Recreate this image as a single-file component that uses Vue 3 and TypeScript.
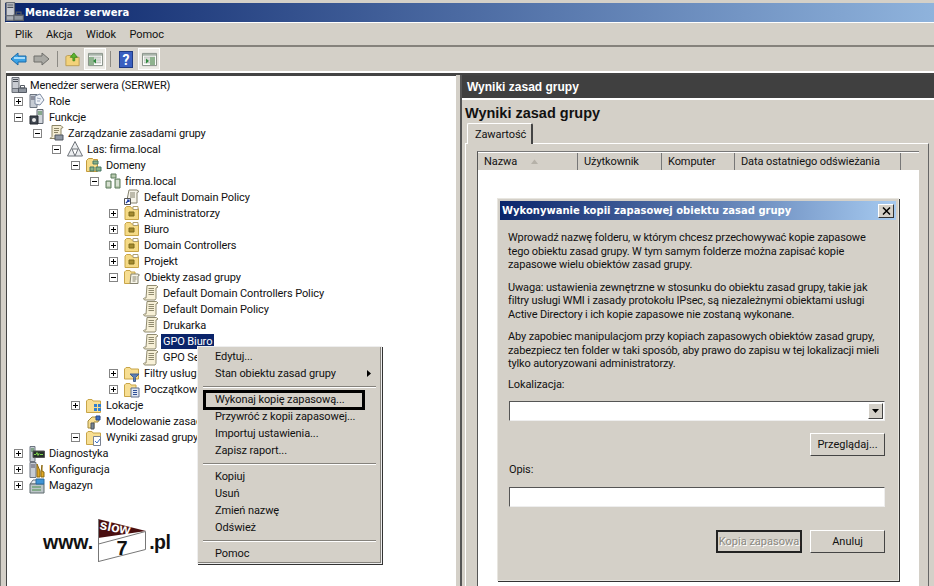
<script setup lang="ts">
interface TreeRow {
  label: string;
  depth: number;
  icon: string;
  toggle?: '+' | '-';
  selected?: boolean;
}

const menus = ['Plik', 'Akcja', 'Widok', 'Pomoc'];

const rows: TreeRow[] = [
  { label: 'Menedżer serwera (SERWER)', depth: -1, icon: 'server' },
  { label: 'Role', depth: 0, icon: 'roles', toggle: '+' },
  { label: 'Funkcje', depth: 0, icon: 'features', toggle: '-' },
  { label: 'Zarządzanie zasadami grupy', depth: 1, icon: 'gpm', toggle: '-' },
  { label: 'Las: firma.local', depth: 2, icon: 'forest', toggle: '-' },
  { label: 'Domeny', depth: 3, icon: 'domains', toggle: '-' },
  { label: 'firma.local', depth: 4, icon: 'domain', toggle: '-' },
  { label: 'Default Domain Policy', depth: 5, icon: 'link' },
  { label: 'Administratorzy', depth: 5, icon: 'ou', toggle: '+' },
  { label: 'Biuro', depth: 5, icon: 'ou', toggle: '+' },
  { label: 'Domain Controllers', depth: 5, icon: 'ou', toggle: '+' },
  { label: 'Projekt', depth: 5, icon: 'ou', toggle: '+' },
  { label: 'Obiekty zasad grupy', depth: 5, icon: 'gpofolder', toggle: '-' },
  { label: 'Default Domain Controllers Policy', depth: 6, icon: 'scroll' },
  { label: 'Default Domain Policy', depth: 6, icon: 'scroll' },
  { label: 'Drukarka', depth: 6, icon: 'scroll' },
  { label: 'GPO Biuro', depth: 6, icon: 'scroll', selected: true },
  { label: 'GPO Serwery', depth: 6, icon: 'scroll' },
  { label: 'Filtry usługi WMI', depth: 5, icon: 'filter', toggle: '+' },
  { label: 'Początkowe obiekty', depth: 5, icon: 'starter', toggle: '+' },
  { label: 'Lokacje', depth: 3, icon: 'sites', toggle: '+' },
  { label: 'Modelowanie zasad grupy', depth: 3, icon: 'modeling' },
  { label: 'Wyniki zasad grupy', depth: 3, icon: 'results', toggle: '-' },
  { label: 'Diagnostyka', depth: 0, icon: 'diag', toggle: '+' },
  { label: 'Konfiguracja', depth: 0, icon: 'config', toggle: '+' },
  { label: 'Magazyn', depth: 0, icon: 'storage', toggle: '+' },
];

const menuGroups = [
  ['Edytuj...', 'Stan obiektu zasad grupy'],
  ['Wykonaj kopię zapasową...', 'Przywróć z kopii zapasowej...', 'Importuj ustawienia...', 'Zapisz raport...'],
  ['Kopiuj', 'Usuń', 'Zmień nazwę', 'Odśwież'],
  ['Pomoc'],
];

const columns = [
  { label: 'Nazwa', width: 100, sort: true },
  { label: 'Użytkownik', width: 84 },
  { label: 'Komputer', width: 73 },
  { label: 'Data ostatniego odświeżania', width: 166 },
];

const paragraphs = [
  [
    'Wprowadź nazwę folderu, w którym chcesz przechowywać kopie zapasowe',
    'tego obiektu zasad grupy. W tym samym folderze można zapisać kopie',
    'zapasowe wielu obiektów zasad grupy.',
  ],
  [
    'Uwaga: ustawienia zewnętrzne w stosunku do obiektu zasad grupy, takie jak',
    'filtry usługi WMI i zasady protokołu IPsec, są niezależnymi obiektami usługi',
    'Active Directory i ich kopie zapasowe nie zostaną wykonane.',
  ],
  [
    'Aby zapobiec manipulacjom przy kopiach zapasowych obiektów zasad grupy,',
    'zabezpiecz ten folder w taki sposób, aby prawo do zapisu w tej lokalizacji mieli',
    'tylko autoryzowani administratorzy.',
  ],
];
</script>

<template>
  <div class="window">
    <svg class="defs" width="0" height="0" aria-hidden="true">
      <symbol id="i-server" viewBox="0 0 16 16">
        <path d="M1 0.500h7v11H1z" fill="#c9ccd2" stroke="#6b7078" />
        <path d="M2 2.500h5M2 4.500h5" stroke="#4a4f58" />
        <path d="M1 11.500h7v4H1z" fill="#a8adb5" stroke="#6b7078" />
        <path d="M7.500 11h8v4.500h-8z" fill="#8d949e" stroke="#555b64" />
        <path d="M9.500 8.500h4v2.500h-4z" fill="none" stroke="#555b64" />
      </symbol>
      <symbol id="i-roles" viewBox="0 0 16 16">
        <path d="M1 1.500h7v13H1z" fill="#c6ccd4" stroke="#6d7580" />
        <path d="M2 4h5M2 6h5" stroke="#556" />
        <path d="M6 3l5-2 4 6-4 5-5-1z" fill="#eef2f8" stroke="#7d8aa0" />
        <path d="M8 5l4 1M8 8l3 0" stroke="#9aa6ba" />
      </symbol>
      <symbol id="i-features" viewBox="0 0 16 16">
        <path d="M8 0.500h6v14H8z" fill="#d2d6dc" stroke="#5f6670" />
        <path d="M9 3h4M9 5h4" stroke="#3d7a3d" />
        <path d="M1 7h8v8H1z" fill="#3f4650" stroke="#22272e" />
        <circle cx="5" cy="11" r="2" fill="#e8e8e8" />
      </symbol>
      <symbol id="i-gpm" viewBox="0 0 16 16">
        <path d="M4 0.500h9l2 2-2 1v10H2l2-2z" fill="#f3ecd2" stroke="#8b8465" />
        <path d="M6 3.500h5M6 5.500h5M6 7.500h4" stroke="#8b8465" />
        <path d="M7 10h8v5H7z" fill="#8f98a4" stroke="#505760" />
      </symbol>
      <symbol id="i-forest" viewBox="0 0 16 16">
        <path d="M8 0.500L15.500 15H0.500z" fill="#eceef0" stroke="#6d7278" />
        <path d="M5 8h6L8 15z" fill="#fff" stroke="#6d7278" />
      </symbol>
      <symbol id="i-domains" viewBox="0 0 16 16">
        <path d="M0.500 14V3.500l2-2h4l1 1h4v12H0.500z" fill="#f6dc88" stroke="#c39b3d" />
        <path d="M7 4h5v3H7zM4 10h4v4H4zM10 10h5v4h-5z" fill="#89b287" stroke="#476" />
      </symbol>
      <symbol id="i-domain" viewBox="0 0 16 16">
        <path d="M6 1h5v4H6zM1 8h5v7H1zM10 6h5v9h-5z" fill="#b7c9ad" stroke="#5c7a5c" />
        <path d="M2 10h3M2 12h3M11 8h3M11 10h3M11 12h3" stroke="#f6f6f6" />
      </symbol>
      <symbol id="i-link" viewBox="0 0 16 16">
        <path d="M5 1h8l2 1.500-2 1V14H3V11z" fill="#f6f4ea" stroke="#85826f" />
        <path d="M6 4h5M6 6h5M6 8h5" stroke="#85826f" />
        <path d="M0.500 9.500h6v6h-6z" fill="#fff" stroke="#555" />
        <path d="M2 14l3-3M3 11h2v2" fill="none" stroke="#1d3fa8" stroke-width="1.200" />
      </symbol>
      <symbol id="i-ou" viewBox="0 0 16 16">
        <path d="M1 14.500V3l1.500-1.500h4L7.500 3h6l1 1v10.500z" fill="#f5da85" stroke="#c8a548" />
        <path d="M9 1.500h5v3H9z" fill="#fff" stroke="#b0a070" />
        <path d="M5 7h5v4H5z" fill="#a48a2f" stroke="#7d6a1d" />
      </symbol>
      <symbol id="i-gpofolder" viewBox="0 0 16 16">
        <path d="M0.500 14.500V3l1.500-1.500h4L7 3h4v11.500z" fill="#f7de92" stroke="#c8a548" />
        <path d="M7 5h7l1.500 1-1.500 1v7.500H6z" fill="#f7f5e8" stroke="#85826f" />
        <path d="M8.500 8h4M8.500 10h4M8.500 12h3" stroke="#85826f" />
      </symbol>
      <symbol id="i-scroll" viewBox="0 0 16 16">
        <path d="M4 0.500h9.500l1.500 1.500-2 1v10.500l-1 1.500H1.500l-1-1.500 1-.5H3z" fill="#f7f0d7" stroke="#8f8a6f" />
        <path d="M5.500 3.500h5.500M5.500 5.500h5.500M5.500 7.500h5.500M5.500 9.500h5.500" stroke="#8f8a6f" />
      </symbol>
      <symbol id="i-filter" viewBox="0 0 16 16">
        <path d="M0.500 13V3l1.500-1.500h4L7 3h7.500v10z" fill="#f7de92" stroke="#c8a548" />
        <path d="M6 8h9l-3.500 3.500v4h-2v-4z" fill="#5b7fb5" stroke="#44608a" />
      </symbol>
      <symbol id="i-starter" viewBox="0 0 16 16">
        <path d="M0.500 14.500V3l1.500-1.500h4L7 3h5v11.500z" fill="#f7de92" stroke="#c8a548" />
        <path d="M7 6h8v9H7z" fill="#dfe6f2" stroke="#5f6f8c" />
        <path d="M9 8.500h4M9 10.500h4M9 12.500h4" stroke="#2d4f97" />
      </symbol>
      <symbol id="i-sites" viewBox="0 0 16 16">
        <path d="M0.500 14.500V3l1.500-1.500h4L7 3h7.500v11.500z" fill="#f7de92" stroke="#c8a548" />
        <path d="M8 6h3v3H8zM12 6h3v3h-3zM8 10h3v3H8zM12 10h3v3h-3z" fill="#2f7fd0" />
      </symbol>
      <symbol id="i-modeling" viewBox="0 0 16 16">
        <path d="M2 7l4-4h8l-2 5H8v6H2z" fill="#f7de92" stroke="#a48a3a" />
        <path d="M5 9h3v6H5z" fill="#7a8795" stroke="#4d5560" />
        <path d="M10 2h4v4h-4z" fill="#3f6fc0" stroke="#2a4a88" />
      </symbol>
      <symbol id="i-results" viewBox="0 0 16 16">
        <path d="M0.500 14.500V3l1.500-1.500h4L7 3h7.500v11.500z" fill="#f7de92" stroke="#c8a548" />
        <path d="M7.500 6.500h7v9h-7z" fill="#fff" stroke="#7a8290" />
        <path d="M9 11l2 2 3-4" fill="none" stroke="#3b70c4" />
      </symbol>
      <symbol id="i-diag" viewBox="0 0 16 16">
        <path d="M1 0.500h5v15H1z" fill="#c6ccd4" stroke="#6d7580" />
        <path d="M2 3h3M2 5h3" stroke="#3d7a3d" />
        <path d="M4 5h11.500v6.500H4z" fill="#26302a" stroke="#555" />
        <path d="M5 8.500h2l1-2 1 3 1-2 1 1h3" fill="none" stroke="#7fd34e" />
      </symbol>
      <symbol id="i-config" viewBox="0 0 16 16">
        <path d="M1 0.500h6v15H1z" fill="#c6ccd4" stroke="#6d7580" />
        <path d="M2 3h4M2 5h4" stroke="#556" />
        <path d="M8 2l3 7v6H8V9z" fill="#e0a825" stroke="#8d6a12" />
        <path d="M13 3v6l2 1v5h-3v-5z" fill="#e0a825" stroke="#8d6a12" />
      </symbol>
      <symbol id="i-storage" viewBox="0 0 16 16">
        <path d="M1 6l3-4h8v4z" fill="#e9ecef" stroke="#6d7580" />
        <path d="M1 6h14v9H1z" fill="#bcc5c8" stroke="#5f6a6e" />
        <path d="M7 1h8v5H7z" fill="#3f94d6" stroke="#2a6a9e" />
        <path d="M3 9h9M3 12h9" stroke="#4d8f4d" />
      </symbol>
      <symbol id="i-pane" viewBox="0 0 16 16">
        <path d="M0.500 1.500h15v13H0.500z" fill="#fff" stroke="#7f8a80" />
        <path d="M1 2h14v2H1z" fill="#a9b4aa" />
        <path d="M2 5.500h12M2 7.500h12M2 9.500h12M2 11.500h12" stroke="#a9b0a8" />
      </symbol>
    </svg>

    <header class="titlebar">
      <svg class="title-icon" width="19" height="19"><use href="#i-server" /></svg>
      <span>Menedżer serwera</span>
    </header>

    <nav class="menubar">
      <span v-for="menu in menus" :key="menu">{{ menu }}</span>
    </nav>

    <div class="toolbar">
      <svg class="tool-back" width="17" height="16" viewBox="0 0 17 16">
        <path d="M1 8l7-6v3h8v6H8v3z" fill="#3aa2e6" stroke="#1c6aa8" />
        <path d="M4 7h11" stroke="#a8dcfa" stroke-width="2" />
      </svg>
      <svg class="tool-forward" width="17" height="16" viewBox="0 0 17 16">
        <path d="M16 8L9 2v3H1v6h8v3z" fill="#a9a9a4" stroke="#6e6e6a" />
      </svg>
      <i class="tool-sep first"></i>
      <svg width="15" height="17" viewBox="0 0 17 17">
        <path d="M1 15.500V5l2-1h5l1 2h7v9.500z" fill="#f3d27a" stroke="#b99a4e" />
        <path d="M9 10V6H6l4-5 4 5h-3v4z" fill="#5fb52e" stroke="#3d8a1a" />
      </svg>
      <span class="tool-on tree-toggle">
        <svg width="17" height="15"><use href="#i-pane" /><path d="M2 5h5v8H2z" fill="#8fb38f" /><path d="M6 9l3-2.500v5z" fill="#2f8a3d" /></svg>
      </span>
      <i class="tool-sep second"></i>
      <svg width="14" height="17" viewBox="0 0 14 17">
        <rect x="0.500" y="0.500" width="13" height="16" fill="#3a5fc0" stroke="#1f3a84" />
        <text x="7" y="13.500" text-anchor="middle" class="help-q">?</text>
      </svg>
      <span class="tool-on action-toggle">
        <svg width="17" height="15"><use href="#i-pane" /><path d="M9 5h5v8H9z" fill="#8fb38f" /><path d="M8 9L5 6.500v5z" fill="#2f8a3d" /></svg>
      </span>
    </div>

    <main class="panes">
      <section class="tree-pane">
        <div
          v-for="(row, i) in rows"
          :key="i"
          class="row"
          :class="{ root: row.depth < 0 }"
          :style="{ paddingLeft: 19 * Math.max(row.depth, 0) + 'px' }"
        >
          <span v-if="row.depth >= 0" class="toggle" :class="{ blank: !row.toggle }">
            <template v-if="row.toggle === '+'">
              <svg width="7" height="7"><path d="M1 3.500h5M3.500 1v5" stroke="#000" /></svg>
            </template>
            <template v-else-if="row.toggle === '-'">
              <svg width="7" height="7"><path d="M1 3.500h5" stroke="#000" /></svg>
            </template>
          </span>
          <svg class="node-icon" width="16" height="16"><use :href="'#i-' + row.icon" /></svg>
          <span class="label" :class="{ selected: row.selected }">{{ row.label }}</span>
        </div>

        <div class="brand">
          <span class="brand-text">www.</span>
          <svg width="48" height="43" viewBox="0 0 48 43">
            <path d="M0 0L48 12 0 19z" fill="#4a0f10" />
            <path d="M0.500 25L47.500 12.500v18L0.500 42.500z" fill="#fff" stroke="#777" />
            <path d="M0.500 0v43" stroke="#777" />
            <text x="1" y="10" class="brand-slow" transform="rotate(11 1 10)">slow</text>
            <text x="24" y="36" text-anchor="middle" class="brand-seven">7</text>
          </svg>
          <span class="brand-text">.pl</span>
        </div>
      </section>

      <section class="result-pane">
        <div class="result-head">Wyniki zasad grupy</div>
        <div class="result-body">
          <h1>Wyniki zasad grupy</h1>
          <div class="tab">Zawartość</div>
          <div class="tab-page">
            <div class="list">
              <div class="list-head">
                <span
                  v-for="col in columns"
                  :key="col.label"
                  class="col"
                  :style="{ width: col.width + 'px' }"
                >
                  {{ col.label }}
                  <svg v-if="col.sort" class="sort" width="9" height="6"><path d="M4.500 0.500L8 5H1z" fill="#b5b1a8" /></svg>
                </span>
                <span class="col last"></span>
              </div>
            </div>
          </div>
        </div>
      </section>
    </main>

    <div class="context-menu">
      <template v-for="(group, g) in menuGroups" :key="g">
        <hr v-if="g > 0" />
        <div
          v-for="item in group"
          :key="item"
          class="menu-item"
          :class="{ boxed: item.startsWith('Wykonaj') }"
        >
          {{ item }}
          <svg v-if="item.startsWith('Stan')" class="arrow" width="4" height="7"><path d="M0 0l4 3.500L0 7z" fill="#000" /></svg>
        </div>
      </template>
    </div>

    <div class="dialog">
      <div class="dialog-title">
        <span>Wykonywanie kopii zapasowej obiektu zasad grupy</span>
        <button class="close" type="button" aria-label="Zamknij">
          <svg width="9" height="8"><path d="M1 0.500l7 7M8 0.500l-7 7" stroke="#000" stroke-width="1.500" /></svg>
        </button>
      </div>
      <div class="dialog-body">
        <p v-for="(lines, p) in paragraphs" :key="p">
          <span v-for="line in lines" :key="line" class="line">{{ line }}</span>
        </p>
        <label class="field-label first">Lokalizacja:</label>
        <div class="combo">
          <span class="combo-btn">
            <svg width="7" height="4"><path d="M0 0h7L3.500 4z" fill="#000" /></svg>
          </span>
        </div>
        <div class="actions browse">
          <button class="btn" type="button">Przeglądaj...</button>
        </div>
        <label class="field-label">Opis:</label>
        <div class="text-input"></div>
        <div class="actions footer">
          <button class="btn default" type="button" disabled>Kopia zapasowa</button>
          <button class="btn" type="button">Anuluj</button>
        </div>
      </div>
    </div>
  </div>
</template>

<style>
html,
body {
  margin: 0;
  padding: 0;
  overflow: hidden;
}
</style>

<style scoped>
.window {
  position: relative;
  width: 934px;
  height: 586px;
  overflow: hidden;
  box-sizing: border-box;
  padding: 3px 0 0 5px;
  background: #d4d0c8;
  border-left: 1px solid #7a7a76;
  font-family: Roboto, "Liberation Sans", Arial, sans-serif;
  font-size: 11px;
  letter-spacing: -0.1px;
  color: #111;
  display: flex;
  flex-direction: column;
}

.defs {
  position: absolute;
}

.titlebar {
  height: 19px;
  flex: none;
  box-sizing: border-box;
  display: flex;
  align-items: center;
  gap: 1px;
  margin-left: -1px;
  background: linear-gradient(90deg, #0a246a, #8fb3dc);
  color: #fff;
  font-family: "DejaVu Sans", sans-serif;
  font-size: 10px;
  font-weight: bold;
  letter-spacing: 0;
}

.title-icon {
  margin-top: -3px;
}

.menubar {
  height: 25px;
  flex: none;
  box-sizing: border-box;
  display: flex;
  align-items: center;
  gap: 13.500px;
  padding-left: 9px;
  border-top: 1px solid #fff;
  border-bottom: 2px solid #85827c;
}

.toolbar {
  height: 26px;
  flex: none;
  box-sizing: border-box;
  display: flex;
  align-items: center;
  padding-left: 4px;
  border-bottom: 2px solid #fff;
  box-shadow: 0 2px 0 #444;
}

.tool-forward {
  margin-left: 6px;
}

.tool-sep {
  width: 1px;
  height: 16px;
  background: #8c8a84;
}

.tool-sep.first {
  margin: 0 7px;
}

.tool-sep.second {
  margin: 0 8px 0 4px;
}

.tool-on {
  display: flex;
  align-items: center;
  justify-content: center;
  width: 22px;
  height: 22px;
  background: #ecebe6;
  border: 1px solid #fff;
  box-sizing: border-box;
}

.tree-toggle {
  margin-left: 4px;
}

.action-toggle {
  margin-left: 5px;
}

.help-q {
  fill: #fff;
  font-size: 14px;
  font-weight: bold;
}

.panes {
  flex: 1;
  min-height: 0;
  display: flex;
  margin-top: 2px;
}

.tree-pane {
  position: relative;
  width: 450px;
  flex: none;
  box-sizing: border-box;
  padding-top: 1px;
  background: #fff;
  border-top: 1px solid #444;
  border-left: 1px solid #444;
}

.row {
  height: 16.040px;
  display: flex;
  align-items: center;
  box-sizing: border-box;
  margin-left: 7px;
  white-space: nowrap;
}

.row.root {
  margin-left: 4px;
}

.row.root .node-icon {
  margin-right: 1px;
}

.toggle {
  width: 9px;
  height: 9px;
  flex: none;
  margin-right: 6px;
  box-sizing: border-box;
  border: 1px solid #848484;
  display: flex;
  align-items: center;
  justify-content: center;
  background: #fff;
}

.toggle svg {
  flex: none;
}

.toggle.blank {
  border-color: transparent;
}

.node-icon {
  flex: none;
  margin-right: 2px;
}

.label {
  padding: 1px 2px;
  line-height: 13px;
}

.label.selected {
  background: #0a246a;
  color: #fff;
}

.brand {
  position: absolute;
  left: 36px;
  top: 443px;
  display: flex;
  align-items: center;
  gap: 5px;
}

.brand-text {
  margin-top: 3px;
  font-family: "Liberation Sans", Arial, sans-serif;
  font-size: 19.500px;
  font-weight: bold;
  letter-spacing: 0;
  color: #111;
}

.brand-text:last-child {
  margin-left: -2px;
  letter-spacing: -0.5px;
}

.brand-slow {
  fill: #fff;
  font-family: "Liberation Sans", Arial, sans-serif;
  font-size: 14px;
  font-weight: bold;
  letter-spacing: 0;
}

.brand-seven {
  fill: #111;
  font-family: "Liberation Sans", Arial, sans-serif;
  font-size: 20px;
  font-weight: bold;
}

.result-pane {
  flex: 1;
  min-width: 0;
  margin-left: 4px;
  border-left: 2px solid #555;
  display: flex;
  flex-direction: column;
}

.result-head {
  height: 23px;
  flex: none;
  display: flex;
  align-items: center;
  padding-left: 5px;
  background: #404040;
  color: #fff;
  font-family: "Liberation Sans", Arial, sans-serif;
  font-weight: bold;
  font-size: 12px;
  letter-spacing: 0;
}

.result-body {
  flex: 1;
  min-height: 0;
  box-sizing: border-box;
  padding: 3px 5px 0 3px;
  border-top: 2px solid #fff;
  display: flex;
  flex-direction: column;
}

h1 {
  margin: 0;
  height: 20px;
  line-height: 20px;
  font-family: "Liberation Sans", Arial, sans-serif;
  font-size: 14.500px;
  font-weight: bold;
  letter-spacing: 0;
  color: #111;
}

.tab {
  align-self: flex-start;
  box-sizing: border-box;
  width: 66px;
  height: 21px;
  margin-left: 2px;
  margin-bottom: -1px;
  padding: 4px 0 0 7px;
  position: relative;
  background: #d4d0c8;
  border: 1px solid #fff;
  border-right: 2px solid #444;
  border-bottom: none;
  border-radius: 2px 2px 0 0;
}

.tab-page {
  flex: 1;
  min-height: 0;
  box-sizing: border-box;
  padding: 7px 9px 0 11px;
  border: 1px solid #fff;
  border-right-color: #666;
  border-bottom: none;
}

.list {
  height: 100%;
  background: #fff;
  border-top: 1px solid #777;
  border-left: 1px solid #555;
}

.list-head {
  display: flex;
  height: 17px;
  background: #d4d0c8;
  border-bottom: 1px solid #fff;
  border-top: 1px solid #fff;
}

.col {
  box-sizing: border-box;
  flex: none;
  padding: 2px 0 0 6px;
  border-right: 1px solid #777;
  white-space: nowrap;
}

.col.last {
  flex: 1;
  border-right: none;
}

.sort {
  margin-left: 10px;
}

.context-menu {
  position: absolute;
  left: 196px;
  top: 346px;
  width: 185px;
  box-sizing: border-box;
  padding: 0 3px 1px;
  background: #d4d0c8;
  border: 1px solid #eee;
  box-shadow: 1px 1px 0 #333, inset -1px -1px 0 #85827c;
}

.menu-item {
  position: relative;
  height: 17px;
  line-height: 17px;
  padding-left: 14px;
  white-space: nowrap;
}

.menu-item:first-child {
  margin-top: 1px;
}

.menu-item.boxed::after {
  content: "";
  position: absolute;
  left: 2px;
  right: 13px;
  top: -1px;
  bottom: -2px;
  border: 3px solid #000;
}

.arrow {
  position: absolute;
  right: 7px;
  top: 5px;
}

hr {
  margin: 4px 2px 3px;
  height: 0;
  border: none;
  border-top: 1px solid #85827c;
  border-bottom: 1px solid #fff;
}

.dialog {
  position: absolute;
  left: 496px;
  top: 198px;
  width: 402px;
  height: 383px;
  box-sizing: border-box;
  padding: 2px;
  background: #d4d0c8;
  border: 1px solid #e8e6e0;
  box-shadow: 1px 1px 0 #333;
  display: flex;
  flex-direction: column;
}

.dialog-title {
  height: 19px;
  flex: none;
  display: flex;
  align-items: center;
  justify-content: space-between;
  padding: 0 2px;
  background: linear-gradient(90deg, #0a246a, #a6caf0);
  color: #fff;
  font-family: "DejaVu Sans", sans-serif;
  font-size: 10px;
  font-weight: bold;
  letter-spacing: 0;
}

.close {
  width: 16px;
  height: 14px;
  padding: 0;
  display: flex;
  align-items: center;
  justify-content: center;
  background: #d4d0c8;
  border: 1px solid #fff;
  border-right-color: #333;
  border-bottom-color: #333;
}

.dialog-body {
  flex: 1;
  min-height: 0;
  padding: 11px 11px 0 9px;
  display: flex;
  flex-direction: column;
}

p {
  margin: 0 0 9px -1px;
  line-height: 13.500px;
  letter-spacing: -0.15px;
}

.line {
  display: block;
  white-space: nowrap;
}

.field-label {
  height: 13px;
  line-height: 13px;
}

.field-label.first {
  margin-top: -2px;
  margin-left: -1px;
}

.combo {
  margin-top: 10px;
  height: 20px;
  flex: none;
  box-sizing: border-box;
  display: flex;
  justify-content: flex-end;
  align-items: center;
  background: #fff;
  border-top: 1px solid #555;
  border-left: 1px solid #555;
  border-right: 1px solid #eee;
  border-bottom: 1px solid #eee;
  padding-right: 1px;
}

.combo-btn {
  width: 15px;
  height: 16px;
  display: flex;
  align-items: center;
  justify-content: center;
  box-sizing: border-box;
  background: #d4d0c8;
  border: 1px solid #fff;
  border-right-color: #444;
  border-bottom-color: #444;
}

.actions {
  display: flex;
  justify-content: flex-end;
  gap: 8px;
}

.browse {
  margin-top: 12px;
  margin-bottom: 7px;
}

.btn {
  width: 75px;
  height: 23px;
  padding: 0;
  flex: none;
  box-sizing: border-box;
  background: #d4d0c8;
  border: 1px solid #fff;
  border-right-color: #444;
  border-bottom-color: #444;
  font: inherit;
  color: #111;
}

.btn.default {
  width: 86px;
  border: 2px solid #222;
  color: #8a8880;
  text-shadow: 1px 1px 0 #fff;
  white-space: nowrap;
}

.text-input {
  margin-top: 11px;
  height: 20px;
  flex: none;
  box-sizing: border-box;
  background: #fff;
  border-top: 1px solid #555;
  border-left: 1px solid #555;
  border-right: 1px solid #eee;
  border-bottom: 1px solid #eee;
}

.footer {
  margin-top: 23px;
}
</style>
